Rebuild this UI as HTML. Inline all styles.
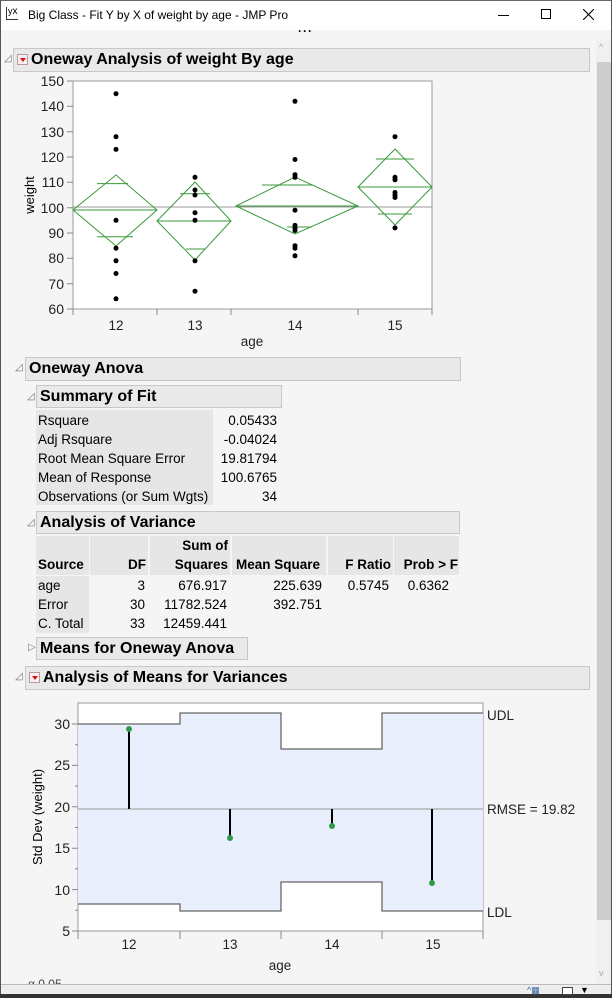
<!DOCTYPE html>
<html><head><meta charset="utf-8"><style>
*{margin:0;padding:0;box-sizing:border-box}
body{width:612px;height:998px;overflow:hidden;background:#f5f5f5;font-family:"Liberation Sans",sans-serif;position:relative;color:#000}
.a{position:absolute}
.hdr{position:absolute;background:#e9e9e9;border:1px solid #c8c8c8;font-weight:bold;font-size:16px;line-height:22px;padding-left:3px}
.tri{position:absolute;font-size:10px;color:#777}
.rt{display:inline-block;width:11px;height:11px;border:1px solid #b99;background:#f8f0f0;position:relative;top:1px;margin-right:3px}
.rt:after{content:"";position:absolute;left:2px;top:3px;border-left:3px solid transparent;border-right:3px solid transparent;border-top:4px solid #d11}
.t{font-size:13.5px;position:absolute;white-space:nowrap}
.r{text-align:right}
</style></head><body>
<!-- title bar -->
<div class="a" style="left:0;top:0;width:612px;height:30px;background:#fff;border-top:1px solid #666"></div>
<div class="a" style="left:8px;top:6px;font-size:9px;">y<span style="font-size:10px">x</span></div>
<div class="a" style="left:6px;top:7px;width:1px;height:12px;background:#333"></div>
<div class="a" style="left:6px;top:19px;width:12px;height:1px;background:#333"></div>
<div class="t" style="left:28px;top:8px;font-size:12px">Big Class - Fit Y by X of weight by age - JMP Pro</div>
<div class="a" style="left:498px;top:15px;width:11px;height:1px;background:#000"></div>
<div class="a" style="left:541px;top:9px;width:10px;height:10px;border:1px solid #000"></div>
<svg class="a" style="left:583px;top:9px" width="11" height="11"><path d="M0 0L11 11M11 0L0 11" stroke="#000" stroke-width="1.1"/></svg>
<div class="t" style="left:298px;top:24px;font-size:12px;font-weight:bold;letter-spacing:1px">···</div>
<div class="a" style="left:0;top:0;width:1px;height:998px;background:#555"></div>
<div class="a" style="left:611px;top:0;width:1px;height:998px;background:#555"></div>
<!-- scrollbar -->
<div class="a" style="left:596px;top:40px;width:15px;height:944px;background:#f0f0f0"></div>
<div class="a" style="left:597px;top:62px;width:14px;height:858px;background:#cdcdcd"></div>
<div class="t" style="left:599px;top:42px;font-size:9px;color:#aaa">^</div>
<div class="t" style="left:599px;top:968px;font-size:9px;color:#aaa">v</div>
<div class="t" style="left:28px;top:977px;font-size:12px;color:#444">α 0.05</div>
<!-- status -->
<div class="a" style="left:1px;top:984px;width:610px;height:11px;background:#eee;border-top:1px solid #bbb"></div>
<div class="a" style="left:0;top:994px;width:612px;height:4px;background:#333"></div>
<div class="t" style="left:527px;top:985px;font-size:9px;color:#369">^▦</div>
<div class="a" style="left:562px;top:987px;width:11px;height:8px;border:1px solid #444;background:#fff"></div>
<div class="t" style="left:580px;top:985px;font-size:9px">▼</div>

<!-- headers -->
<div class="tri" style="left:4px;top:53px">◿</div>
<div class="hdr" style="left:13px;top:48px;width:577px;height:24px"><span class="rt"></span>Oneway Analysis of weight By age</div>
<div class="tri" style="left:15px;top:362px">◿</div>
<div class="hdr" style="left:25px;top:357px;width:436px;height:24px">Oneway Anova</div>
<div class="tri" style="left:27px;top:391px">◿</div>
<div class="hdr" style="left:36px;top:385px;width:246px;height:23px">Summary of Fit</div>
<div class="tri" style="left:27px;top:517px">◿</div>
<div class="hdr" style="left:36px;top:511px;width:424px;height:23px">Analysis of Variance</div>
<div class="tri" style="left:28px;top:642px">▷</div>
<div class="hdr" style="left:36px;top:637px;width:212px;height:23px">Means for Oneway Anova</div>
<div class="tri" style="left:15px;top:671px">◿</div>
<div class="hdr" style="left:25px;top:666px;width:565px;height:24px"><span class="rt"></span>Analysis of Means for Variances</div>

<!-- summary of fit -->
<div class="a" style="left:36px;top:410px;width:177px;height:95px;background:#e6e6e6"></div>
<div class="t" style="left:38px;top:413px">Rsquare</div><div class="t r" style="left:200px;width:77px;top:413px">0.05433</div>
<div class="t" style="left:38px;top:432px">Adj Rsquare</div><div class="t r" style="left:200px;width:77px;top:432px">-0.04024</div>
<div class="t" style="left:38px;top:451px">Root Mean Square Error</div><div class="t r" style="left:200px;width:77px;top:451px">19.81794</div>
<div class="t" style="left:38px;top:470px">Mean of Response</div><div class="t r" style="left:200px;width:77px;top:470px">100.6765</div>
<div class="t" style="left:38px;top:489px">Observations (or Sum Wgts)</div><div class="t r" style="left:200px;width:77px;top:489px">34</div>

<!-- anova -->
<div class="a" style="left:36px;top:536px;width:53px;height:39px;background:#e6e6e6"></div>
<div class="a" style="left:90px;top:536px;width:58px;height:39px;background:#e6e6e6"></div>
<div class="a" style="left:150px;top:536px;width:80px;height:39px;background:#e6e6e6"></div>
<div class="a" style="left:232px;top:536px;width:94px;height:39px;background:#e6e6e6"></div>
<div class="a" style="left:328px;top:536px;width:65px;height:39px;background:#e6e6e6"></div>
<div class="a" style="left:394px;top:536px;width:65px;height:39px;background:#e6e6e6"></div>
<div class="a" style="left:36px;top:576px;width:53px;height:57px;background:#e6e6e6"></div>
<div class="t" style="left:38px;top:557px;font-weight:bold">Source</div>
<div class="t r" style="left:90px;width:56px;top:557px;font-weight:bold">DF</div>
<div class="t r" style="left:150px;width:78px;top:538px;font-weight:bold">Sum of</div>
<div class="t r" style="left:150px;width:78px;top:557px;font-weight:bold">Squares</div>
<div class="t" style="left:236px;top:557px;font-weight:bold">Mean Square</div>
<div class="t r" style="left:328px;width:63px;top:557px;font-weight:bold">F Ratio</div>
<div class="t r" style="left:394px;width:64px;top:557px;font-weight:bold">Prob &gt; F</div>
<div class="t" style="left:38px;top:578px">age</div><div class="t r" style="left:90px;width:55px;top:578px">3</div><div class="t r" style="left:150px;width:77px;top:578px">676.917</div><div class="t r" style="left:232px;width:90px;top:578px">225.639</div><div class="t r" style="left:328px;width:61px;top:578px">0.5745</div><div class="t r" style="left:394px;width:55px;top:578px">0.6362</div>
<div class="t" style="left:38px;top:597px">Error</div><div class="t r" style="left:90px;width:55px;top:597px">30</div><div class="t r" style="left:150px;width:77px;top:597px">11782.524</div><div class="t r" style="left:232px;width:90px;top:597px">392.751</div>
<div class="t" style="left:38px;top:616px">C. Total</div><div class="t r" style="left:90px;width:55px;top:616px">33</div><div class="t r" style="left:150px;width:77px;top:616px">12459.441</div>

<!-- plot 1 -->
<svg class="a" style="left:0;top:72px" width="596" height="290" viewBox="0 72 596 290" font-family="Liberation Sans, sans-serif">
<rect x="73" y="81" width="359" height="228" fill="#fff" stroke="#999"/>
<g font-size="14" text-anchor="end" fill="#222">
<text x="64" y="86">150</text><text x="64" y="111">140</text><text x="64" y="137">130</text><text x="64" y="162">120</text><text x="64" y="187">110</text><text x="64" y="213">100</text><text x="64" y="238">90</text><text x="64" y="263">80</text><text x="64" y="289">70</text><text x="64" y="314">60</text>
</g>
<g stroke="#888"><path d="M67 81h6M67 106.3h6M67 131.7h6M67 157h6M67 182.3h6M67 207.7h6M67 233h6M67 258.3h6M67 283.7h6M67 309h6"/><path d="M73 309v6M157 309v6M231 309v6M358 309v6M432 309v6"/></g>
<g font-size="13.5" text-anchor="middle" fill="#222"><text x="116" y="330">12</text><text x="195" y="330">13</text><text x="295" y="330">14</text><text x="395" y="330">15</text><text x="252" y="346">age</text></g>
<text transform="translate(34,195) rotate(-90)" font-size="13" text-anchor="middle">weight</text>
<line x1="73" y1="207" x2="432" y2="207" stroke="#999"/>
<g fill="none" stroke="#3a9a3a" stroke-width="1">
<path d="M73 210L116 175L157 210L116 246Z"/><path d="M73 210H157M97 183.6H128M97 236.8H133"/>
<path d="M157 221L195 182L231 221L195 260Z"/><path d="M157 221H231M180 193.7H210M186 249H205"/>
<path d="M236 206L295 177L358 206L295 234Z"/><path d="M236 206H358M262 185H313M287 227H312"/>
<path d="M358 187L395 149L432 187L395 225Z"/><path d="M358 187H432M376 159H414M378 214H412"/>
</g>
<g fill="#000">
<circle cx="116" cy="93.7" r="2.5"/><circle cx="116" cy="136.7" r="2.5"/><circle cx="116" cy="149.4" r="2.5"/><circle cx="116" cy="220.3" r="2.5"/><circle cx="116" cy="248.2" r="2.5"/><circle cx="116" cy="260.8" r="2.5"/><circle cx="116" cy="273.5" r="2.5"/><circle cx="116" cy="298.8" r="2.5"/>
<circle cx="195" cy="177.3" r="2.5"/><circle cx="195" cy="190" r="2.5"/><circle cx="195" cy="195" r="2.5"/><circle cx="195" cy="212.7" r="2.5"/><circle cx="195" cy="220.3" r="2.5"/><circle cx="195" cy="260.8" r="2.5"/><circle cx="195" cy="291.2" r="2.5"/>
<circle cx="295" cy="101.3" r="2.5"/><circle cx="295" cy="159.5" r="2.5"/><circle cx="295" cy="174.7" r="2.5"/><circle cx="295" cy="177.3" r="2.5"/><circle cx="295" cy="210.2" r="2.5"/><circle cx="295" cy="225.4" r="2.5"/><circle cx="295" cy="228" r="2.5"/><circle cx="295" cy="230.5" r="2.5"/><circle cx="295" cy="245.7" r="2.5"/><circle cx="295" cy="248.2" r="2.5"/><circle cx="295" cy="255.8" r="2.5"/>
<circle cx="395" cy="136.7" r="2.5"/><circle cx="395" cy="177.3" r="2.5"/><circle cx="395" cy="179.8" r="2.5"/><circle cx="395" cy="192.5" r="2.5"/><circle cx="395" cy="195" r="2.5"/><circle cx="395" cy="197.5" r="2.5"/><circle cx="395" cy="227.9" r="2.5"/>
</g>
</svg>

<!-- plot 2 -->
<svg class="a" style="left:0;top:692px" width="596" height="290" viewBox="0 692 596 290" font-family="Liberation Sans, sans-serif">
<rect x="78" y="703" width="405" height="228" fill="#fff" stroke="#999"/>
<path d="M78 724H180V713H281V749H382V713H483V911H382V882H281V911H180V904H78Z" fill="#e8eefc"/>
<path d="M78 724H180V713H281V749H382V713H483M78 904H180V911H281V882H382V911H483" fill="none" stroke="#666" stroke-width="1.3"/>
<line x1="78" y1="809" x2="483" y2="809" stroke="#999"/>
<g stroke="#000" stroke-width="2"><path d="M129 809V729M230 809V838M332 809V826M432 809V883"/></g>
<g fill="#2e9a4a"><circle cx="129" cy="729" r="3"/><circle cx="230" cy="838" r="3"/><circle cx="332" cy="826" r="3"/><circle cx="432" cy="883" r="3"/></g>
<g font-size="14" text-anchor="end" fill="#222"><text x="70" y="729">30</text><text x="70" y="770">25</text><text x="70" y="812">20</text><text x="70" y="853">15</text><text x="70" y="895">10</text><text x="70" y="936">5</text></g>
<g stroke="#888"><path d="M72 724h6M72 765.4h6M72 806.8h6M72 848.2h6M72 889.6h6M72 931h6M75 744.7h3M75 786.1h3M75 827.5h3M75 868.9h3M75 910.3h3"/><path d="M78 931v8M180 931v8M281 931v8M382 931v8M483 931v8"/></g>
<g font-size="13.5" text-anchor="middle" fill="#222"><text x="129" y="949">12</text><text x="230" y="949">13</text><text x="332" y="949">14</text><text x="433" y="949">15</text><text x="280" y="970">age</text></g>
<text transform="translate(42,817) rotate(-90)" font-size="13" text-anchor="middle">Std Dev (weight)</text>
<g font-size="13.5" fill="#222"><text x="487" y="720">UDL</text><text x="487" y="814">RMSE = 19.82</text><text x="487" y="917">LDL</text></g>
</svg>
</body></html>
